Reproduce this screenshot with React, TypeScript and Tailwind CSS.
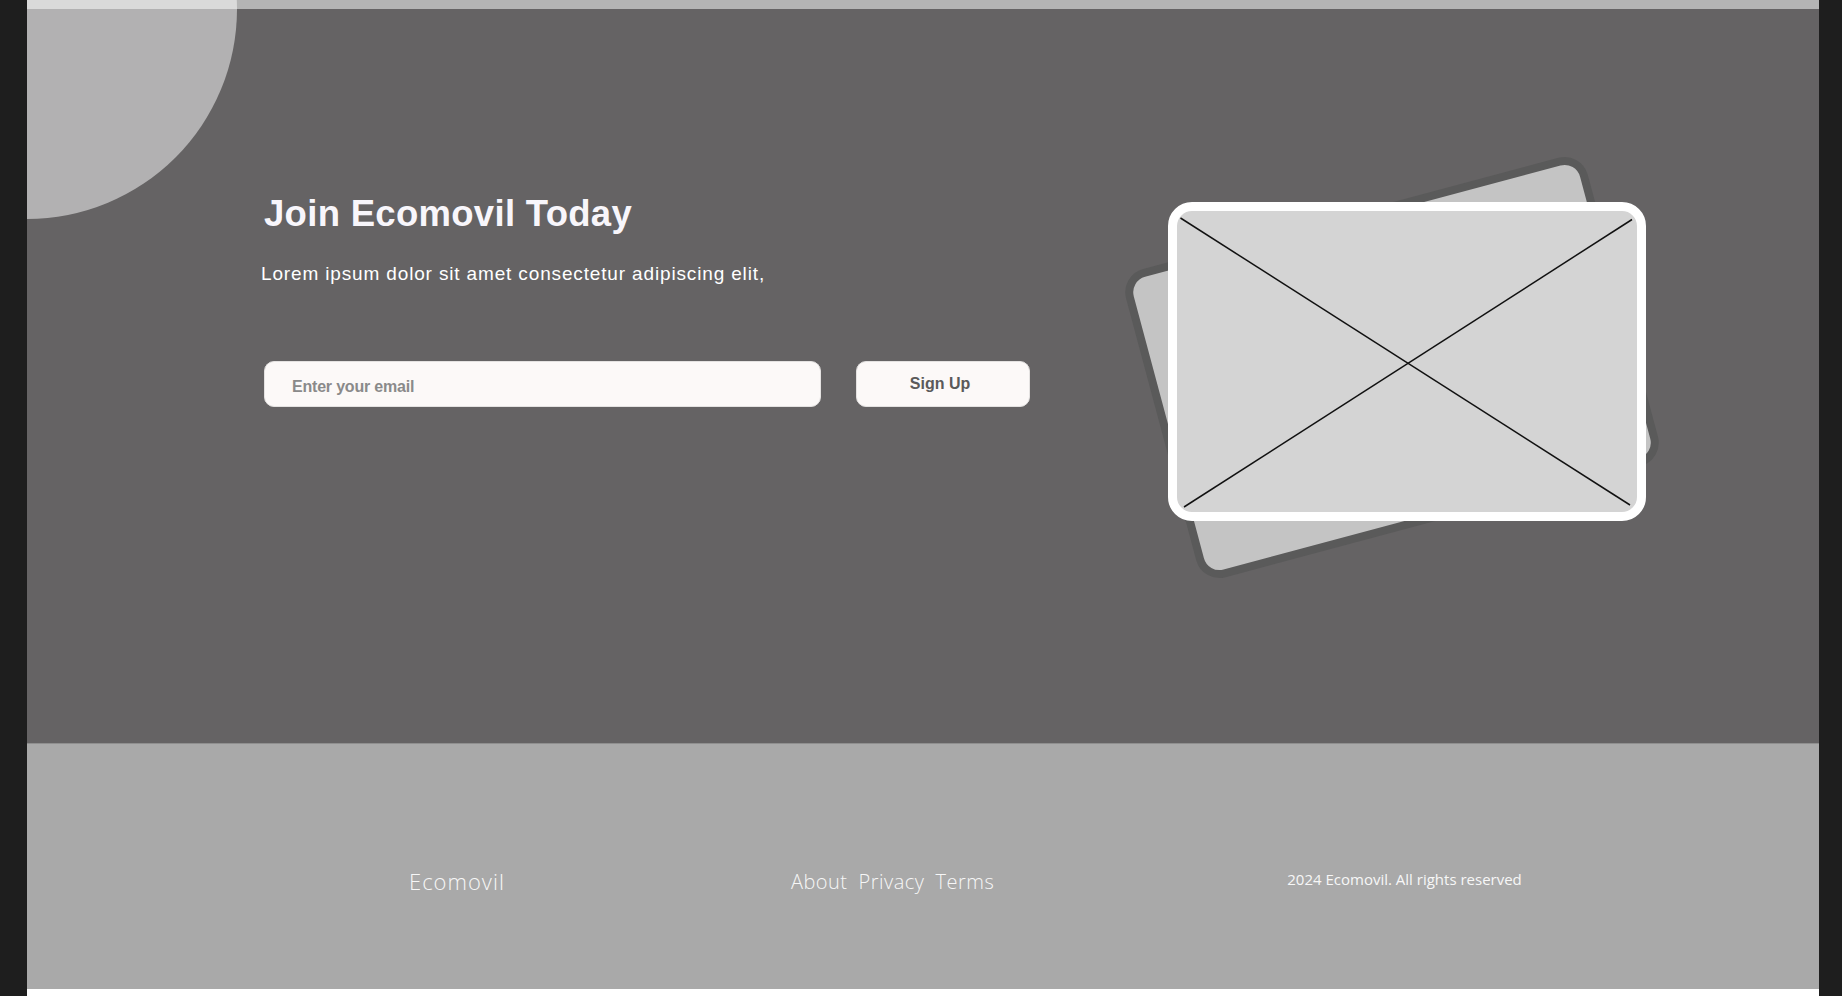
export default function App() {
  return (
    <div className="min-h-screen w-full bg-[#1e1e1e]">
      <div className="relative ml-[27px] h-[996px] w-[1792px] overflow-hidden bg-white font-['Liberation_Sans',Arial,sans-serif]">
        <div className="h-[9px] bg-[#b4b4b4]" />

        <section className="flex h-[734px] items-start bg-[#656364] pl-[237px] pt-[185px]">
          <div className="w-[767px] shrink-0">
            <h1 className="text-[36.5px] font-bold leading-[40px] tracking-[0.3px] text-[#f8f6fb]">Join Ecomovil Today</h1>
            <p className="-ml-[3px] mt-[28px] text-[19px] leading-[24px] tracking-[0.85px] text-white">
              Lorem ipsum dolor sit amet consectetur adipiscing elit,
            </p>
            <div className="mt-[75px] flex gap-[35px]">
              <input
                type="email"
                placeholder="Enter your email"
                className="h-[46px] w-[557px] rounded-[10px] border border-[#e4e2e1] bg-[#fcf9f8] pl-[27px] pt-[5px] text-[16px] font-bold tracking-[-0.2px] text-[#555] outline-none placeholder:text-[#8a8a8a]"
              />
              <button className="h-[46px] w-[174px] rounded-[10px] border border-[#e4e2e1] bg-[#fcf9f8] pr-[6px] text-[16px] font-bold text-[#5a5a5a]">
                Sign Up
              </button>
            </div>
          </div>

          {/* placeholder picture: tilted card behind, framed card in front */}
          <div className="relative ml-[137px] mt-[8px] h-[319px] w-[478px] shrink-0">
            <div className="absolute inset-0 -translate-x-[15px] translate-y-[6px] -rotate-[15deg] rounded-[24px] border-[8px] border-[#5a5a5a] bg-[#c4c4c4]" />
            <div className="relative h-full w-full overflow-hidden rounded-[24px] border-[9px] border-white bg-[#d4d4d4]">
              <svg className="block h-full w-full" viewBox="0 0 460 301" preserveAspectRatio="none">
                <line x1="3.5" y1="7" x2="453" y2="294" stroke="#111" strokeWidth="1.5" />
                <line x1="455" y1="8.5" x2="7" y2="296" stroke="#111" strokeWidth="1.5" />
              </svg>
            </div>
          </div>
        </section>

        <footer className="flex h-[246px] items-center border-t border-[#8f8f8f] bg-[#a9a9a9] pl-[382px] pt-[30px] font-['Open_Sans',sans-serif] font-light text-[#f7f7f7]">
          <span className="text-[22px] tracking-[1px]">Ecomovil</span>
          <nav className="ml-[286px] flex gap-[11px] text-[20px] tracking-[0.5px]">
            <a href="#">About</a>
            <a href="#">Privacy</a>
            <a href="#">Terms</a>
          </nav>
          <p className="-mt-[4px] ml-[293px] text-[15px] font-normal tracking-normal">2024 Ecomovil. All rights reserved</p>
        </footer>

        <div className="pointer-events-none absolute -left-[210px] -top-[201px] h-[420px] w-[420px] rounded-full bg-white/50" />
      </div>
    </div>
  );
}
